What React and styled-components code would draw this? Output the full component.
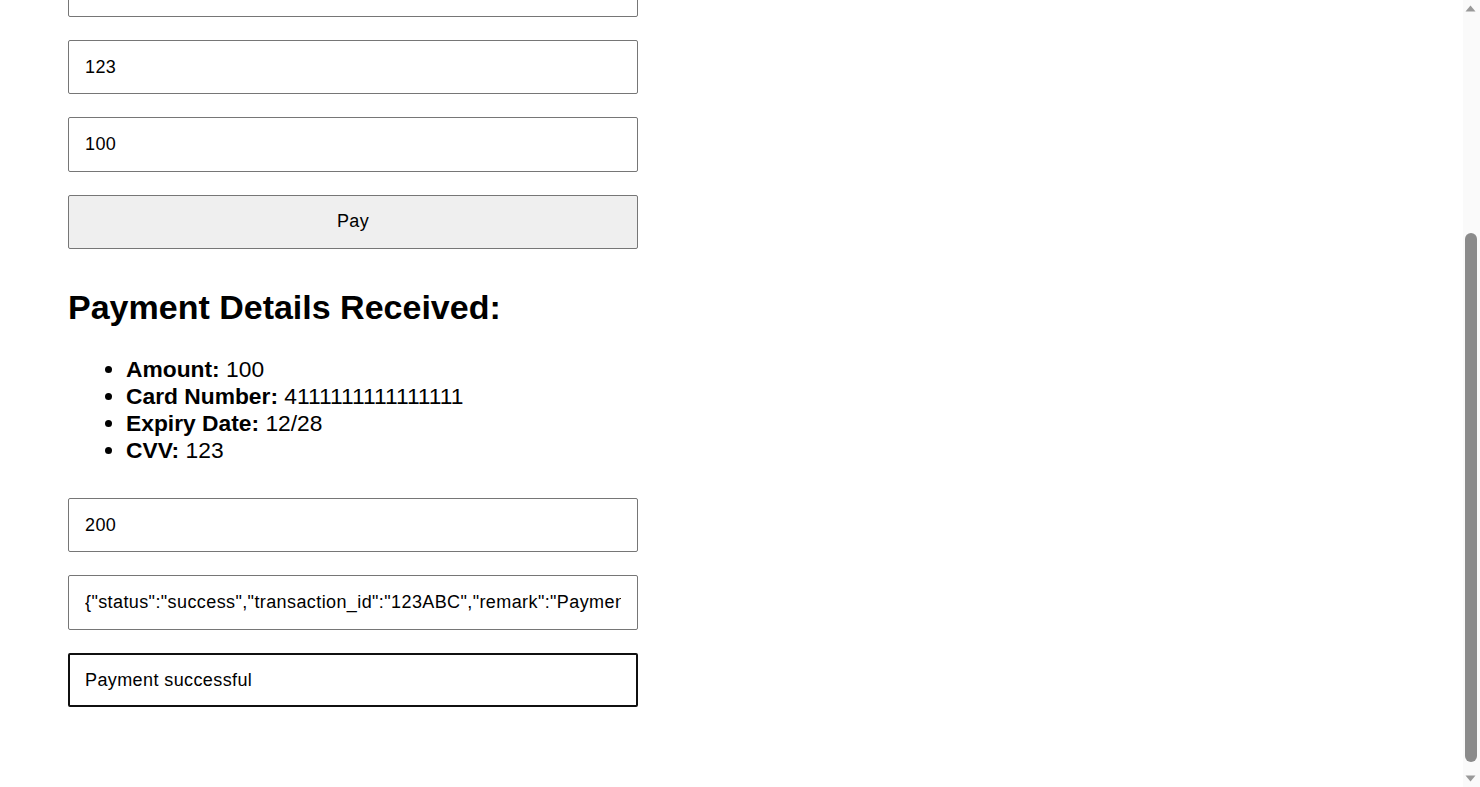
import React, { useEffect, useRef } from "react";
import styled, { createGlobalStyle, css } from "styled-components";

const GlobalStyle = createGlobalStyle`
    html, body {
        margin: 0;
        height: 100%;
        overflow: hidden;
        background: #fff;
        font-family: "Liberation Sans", Arial, sans-serif;
        color: #000;
    }
`;

const Page = styled.div`
    display: flex;
    height: 100vh;
`;

const Viewport = styled.div`
    flex: 1;
    display: flex;
    flex-direction: column;
    justify-content: flex-end;
    overflow: hidden;
`;

const Content = styled.div`
    flex-shrink: 0;
    width: 570px;
    padding: 0 0 80px 68px;
`;

const Form = styled.form`
    display: flex;
    flex-direction: column;
    gap: 23px;
`;

const Field = styled.input`
    box-sizing: border-box;
    width: 100%;
    height: 54.5px;
    margin: 0;
    padding: 1px 16px 0;
    border: 1px solid #767676;
    border-radius: 2px;
    background: #fff;
    font-family: inherit;
    font-size: 18px;
    letter-spacing: 0.4px;
    color: #000;
    caret-color: #000;
    outline: none;

    ${(p) => p.$active && css`
        border: 2px solid #101010;
        padding: 1px 15px 0;
    `}
`;

const PayButton = styled.button`
    box-sizing: border-box;
    width: 100%;
    height: 54.5px;
    padding-top: 1px;
    border: 1px solid #767676;
    border-radius: 2px;
    background: #efefef;
    font-family: inherit;
    font-size: 18px;
    letter-spacing: 0.4px;
    color: #000;
`;

const Title = styled.h2`
    margin: 37.5px 0 0;
    font-size: 34px;
    font-weight: bold;
    line-height: 40px;
`;

const Details = styled.ul`
    margin: 29.5px 0 33.5px;
    padding-left: 58px;
    font-size: 22.8px;
    line-height: 27px;
`;

const Label = styled.strong`
    font-weight: bold;
`;

const ScrollTrack = styled.div`
    width: 17px;
    display: flex;
    flex-direction: column;
    background: #fafafa;
`;

const Arrow = styled.div`
    height: 17px;
    display: flex;
    align-items: center;
    justify-content: center;
    padding-right: 2px;
`;

const Gutter = styled.div`
    flex: 1;
    display: flex;
    flex-direction: column;
    align-items: center;
    padding: 216px 2px 8px 0;
`;

const Thumb = styled.div`
    flex: 1;
    width: 12px;
    border-radius: 6px;
    background: #8b8b8b;
`;

const details = [
    ["Amount:", "100"],
    ["Card Number:", "4111111111111111"],
    ["Expiry Date:", "12/28"],
    ["CVV:", "123"],
];

const response = '{"status":"success","transaction_id":"123ABC","remark":"Payment successful"}';

export default function App() {
    const remarkRef = useRef(null);

    useEffect(() => {
        const el = remarkRef.current;
        if (el) {
            el.focus();
            el.setSelectionRange(el.value.length, el.value.length);
        }
    }, []);

    return (
        <>
            <GlobalStyle />
            <Page>
                <Viewport>
                    <Content>
                        <Form onSubmit={(e) => e.preventDefault()}>
                            <Field defaultValue="4111111111111111" />
                            <Field defaultValue="12/28" />
                            <Field defaultValue="123" />
                            <Field defaultValue="100" />
                            <PayButton type="submit">Pay</PayButton>
                        </Form>

                        <Title>Payment Details Received:</Title>
                        <Details>
                            {details.map(([label, value]) => (
                                <li key={label}>
                                    <Label>{label}</Label> {value}
                                </li>
                            ))}
                        </Details>

                        <Form onSubmit={(e) => e.preventDefault()}>
                            <Field defaultValue="200" />
                            <Field defaultValue={response} />
                            <Field ref={remarkRef} $active defaultValue="Payment successful" />
                        </Form>
                    </Content>
                </Viewport>

                <ScrollTrack>
                    <Arrow>
                        <svg width="11" height="7" viewBox="0 0 11 7">
                            <polygon points="5.5,0.5 10.5,6.5 0.5,6.5" fill="#999999" />
                        </svg>
                    </Arrow>
                    <Gutter>
                        <Thumb />
                    </Gutter>
                    <Arrow>
                        <svg width="11" height="7" viewBox="0 0 11 7">
                            <polygon points="0.5,0.5 10.5,0.5 5.5,6.5" fill="#999999" />
                        </svg>
                    </Arrow>
                </ScrollTrack>
            </Page>
        </>
    );
}
